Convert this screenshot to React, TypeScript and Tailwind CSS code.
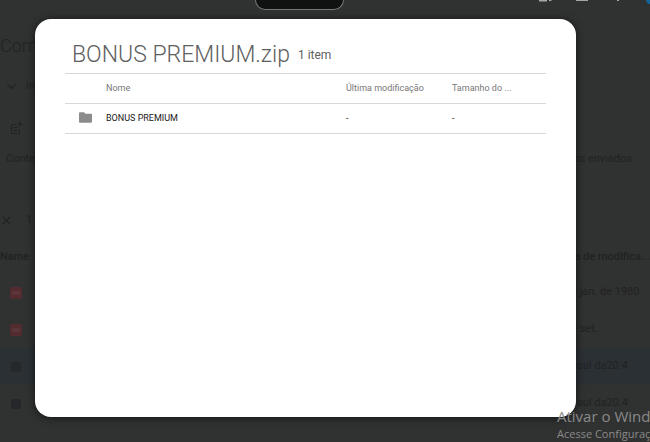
import type { ReactNode } from 'react';
import { ChevronDown, X } from 'lucide-react';

type DriveFile = {
  kind: 'pdf' | 'archive';
  modified: string;
  selected?: boolean;
};

const driveFiles: DriveFile[] = [
  { kind: 'pdf', modified: '1 de jan. de 1980' },
  { kind: 'pdf', modified: '5 de set.' },
  { kind: 'archive', modified: 'a nosul da20.4', selected: true },
  { kind: 'archive', modified: 'a nosul da20.4' },
];

const zipEntries = [{ name: 'BONUS PREMIUM', modified: '-', size: '-' }];

function FolderIcon() {
  return (
    <svg viewBox="0 0 13 11" className="-mt-[3px] h-[11px] w-[13px]" fill="#8c8c8c" aria-hidden="true">
      <path d="M.9 0.3h4.200l1.300 1.400h5.700c.5 0 .9.4.9.9v7.200c0 .5-.4.9-.9.9H.9C.4 10.700 0 10.300 0 9.800V1.200C0 .7.4.3.9.3z" />
    </svg>
  );
}

function AddToListIcon() {
  return (
    <svg viewBox="0 0 14 14" className="size-[14px]" fill="none" stroke="currentColor" aria-hidden="true">
      <path d="M7 3.500H2.500v9h8V8M4.500 6.500h4M4.500 9.500h4M11 0v6M8 3h6" />
    </svg>
  );
}

function FileBadge({ kind }: { kind: DriveFile['kind'] }) {
  if (kind === 'pdf') {
    return (
      <span className="flex size-3 items-center justify-center rounded-[2px] bg-[#542c30]">
        <span className="h-1 w-2 bg-[#5b3639]" />
      </span>
    );
  }
  return <span className="ml-px size-[10px] rounded-[2px] bg-[#25282a]" />;
}

function Topbar() {
  return (
    <header className="relative flex h-[11px] items-start justify-center overflow-hidden pr-[52px]">
      <div className="h-[10px] w-[89px] rounded-b-[14px] border border-t-0 border-[#777] bg-[#101111]" />
      <svg
        viewBox="0 0 112 4"
        className="absolute top-0 right-0 h-1 w-[112px]"
        fill="#a4a6a6"
        aria-hidden="true"
      >
        <path d="M1 0h8v1.500H1zM11 0h3l-1 1h-2zM38 0h12v1H38zM79 0h2v1h-2z" />
        <path d="M108 0h4v4c-2 0-4-2-4-4z" fill="#12649b" />
      </svg>
    </header>
  );
}

function BackdropRow({ className, children }: { className: string; children: ReactNode }) {
  return <div className={`flex items-center justify-between whitespace-nowrap ${className}`}>{children}</div>;
}

function DriveBackdrop() {
  return (
    <div className="text-[11px] text-[#212222]" aria-hidden="true">
      <Topbar />
      <BackdropRow className="h-[70px] text-lg font-light">
        <span>Com</span>
      </BackdropRow>
      <BackdropRow className="h-[10px] px-[4px]">
        <span className="flex items-center gap-[7px]">
          <ChevronDown size={15} />
          In
        </span>
      </BackdropRow>
      <BackdropRow className="h-[73px] px-[9px]">
        <AddToListIcon />
      </BackdropRow>
      <BackdropRow className="-mt-[10px] h-[10px] pr-[18px] pl-[6px]">
        <span>Conte</span>
        <span>itens enviados</span>
      </BackdropRow>
      <BackdropRow className="mt-7 h-14">
        <span className="flex items-center gap-[13px]">
          <X size={13} />
          1
        </span>
      </BackdropRow>
      <BackdropRow className="-mt-px h-[20px] font-medium">
        <span>Name</span>
        <span>Data de modifica...</span>
      </BackdropRow>
      <div className="mt-[7px]">
        {driveFiles.map((file, i) => (
          <BackdropRow
            key={i}
            className={`h-[37px] pr-[8px] pl-[10px] ${file.selected ? 'bg-[#2b3035]' : ''}`}
          >
            <FileBadge kind={file.kind} />
            <span className="w-[86px]">{file.modified}</span>
          </BackdropRow>
        ))}
      </div>
    </div>
  );
}

function ZipDialog() {
  return (
    <section
      role="dialog"
      aria-labelledby="zip-title"
      className="flex-1 rounded-2xl bg-white px-[30px] pt-[18px] shadow-[0_1px_8px_rgba(0,0,0,0.6)]"
    >
      <header className="flex h-9 items-center gap-2 pl-[7px] text-[#606060]">
        <h1 id="zip-title" className="text-[23px] leading-8 font-light">
          BONUS PREMIUM.zip
        </h1>
        <span className="text-[12px]">1 item</span>
      </header>
      <table className="w-full table-fixed border-t border-[#d8d8d8] text-left text-[9px]">
        <colgroup>
          <col className="w-[41px]" />
          <col />
          <col className="w-[106px]" />
          <col className="w-[94px]" />
        </colgroup>
        <thead>
          <tr className="h-[30px] border-b border-[#d8d8d8] text-[#777]">
            <th aria-label="Tipo" />
            <th className="font-normal">Nome</th>
            <th className="font-normal">Última modificação</th>
            <th className="font-normal">Tamanho do ...</th>
          </tr>
        </thead>
        <tbody>
          {zipEntries.map((entry) => (
            <tr key={entry.name} className="h-[30px] border-b border-[#d8d8d8] text-[#202020]">
              <td className="pl-[14px]">
                <FolderIcon />
              </td>
              <td>{entry.name}</td>
              <td>{entry.modified}</td>
              <td>{entry.size}</td>
            </tr>
          ))}
        </tbody>
      </table>
    </section>
  );
}

export default function App() {
  return (
    <main className="relative min-h-screen overflow-hidden bg-[#303131] font-['Roboto',sans-serif]">
      <DriveBackdrop />
      <div className="absolute inset-0 flex pt-[19px] pr-[74px] pb-[25px] pl-[35px]">
        <ZipDialog />
      </div>
      {/* Windows activation notice, runs off the right edge */}
      <div className="absolute bottom-0 left-[calc(100%-93px)] font-['Open_Sans',sans-serif] whitespace-nowrap text-[#8a8a8a]">
        <p className="text-[15px] leading-5">Ativar o Windows</p>
        <p className="text-[11px] leading-4">Acesse Configurações</p>
      </div>
    </main>
  );
}
